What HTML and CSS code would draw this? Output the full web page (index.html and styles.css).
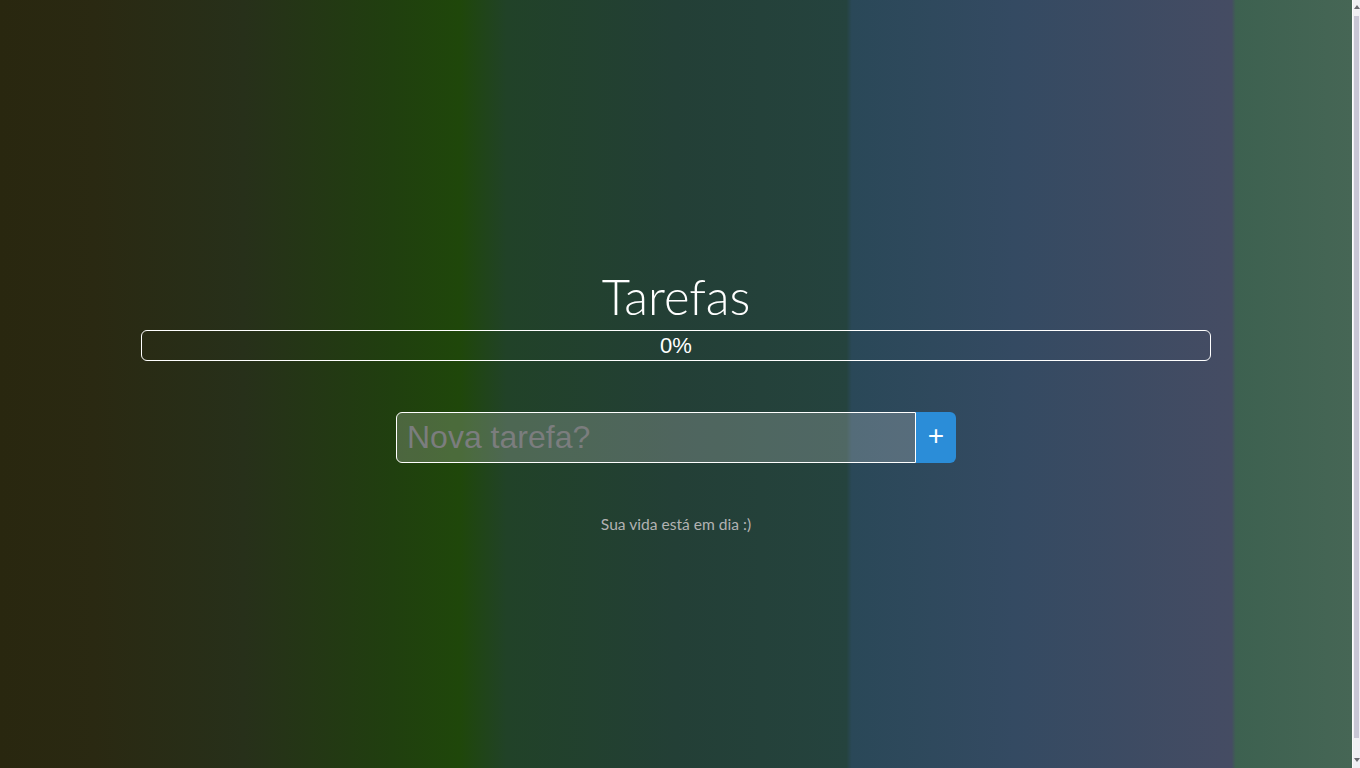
FILE: index.html
```html
<!DOCTYPE html>
<html lang="pt-BR">
<head>
<meta charset="utf-8">
<title>Tarefas</title>
<link rel="stylesheet" href="styles.css">
</head>
<body>
<div class="page">
  <main class="app">
    <h1 class="title">Tarefas</h1>
    <div class="progress"><span class="progress-label">0%</span></div>
    <form class="new-task">
      <input class="new-task-input" type="text" placeholder="Nova tarefa?">
      <button class="new-task-btn" type="button">+</button>
    </form>
    <p class="empty">Sua vida está em dia :)</p>
  </main>
</div>
<div class="scrollbar">
  <div class="scroll-arrow up"></div>
  <div class="scroll-thumb"></div>
  <div class="scroll-arrow down"></div>
</div>
</body>
</html>
```

FILE: styles.css
```css
html, body {
  height: 100%;
}
body {
  margin: 0;
  display: flex;
  overflow: hidden;
  font-family: Lato, "Liberation Sans", sans-serif;
  color: #fff;
  background: #f0eff3;
}
.page {
  flex: 1;
  min-width: 0;
  background: linear-gradient(to right,
    #29270f 0%,
    #2a2912 7%,
    #27301a 18%,
    #203f0f 29%,
    #1f470a 34%,
    #214228 37.5%,
    #233f36 50%,
    #25433e 62.6%,
    #2a4858 63%,
    #344a62 75%,
    #454c63 91.1%,
    #3d6150 91.4%,
    #466655 100%);
}
.app {
  width: 1070px;
  margin: 0 auto;
  padding-top: 267px;
  display: flex;
  flex-direction: column;
  align-items: center;
}
.title {
  margin: 0 0 5px;
  font-size: 49px;
  font-weight: 300;
  line-height: 58px;
  color: #fff;
}
.progress {
  box-sizing: border-box;
  width: 100%;
  height: 31px;
  border: 1px solid #fff;
  border-radius: 6px;
  display: flex;
  align-items: center;
  justify-content: center;
}
.progress-label {
  font-family: "Liberation Sans", Arial, sans-serif;
  font-size: 22px;
  line-height: 29px;
  color: #fff;
}
.new-task {
  margin-top: 51px;
  display: flex;
  width: 560px;
  height: 51px;
}
.new-task-input {
  box-sizing: border-box;
  flex: 1;
  min-width: 0;
  height: 51px;
  margin: 0;
  padding: 0 10px;
  border: 1px solid #fff;
  border-radius: 6px 0 0 6px;
  background: rgba(255, 255, 255, 0.2);
  font-family: "Liberation Sans", Arial, sans-serif;
  font-size: 32px;
  color: #fff;
  outline: none;
}
.new-task-input::placeholder {
  color: #7b7d7e;
}
.new-task-btn {
  box-sizing: border-box;
  width: 40px;
  height: 51px;
  margin: 0;
  padding: 0 0 4px;
  border: none;
  border-radius: 0 6px 6px 0;
  background: #2b8dd8;
  color: #fff;
  font-family: "Liberation Sans", Arial, sans-serif;
  font-size: 28px;
  line-height: 1;
}
.empty {
  margin: 51px 0 0;
  font-size: 15.6px;
  line-height: 20px;
  color: #b2b2b2;
}
.scrollbar {
  width: 8px;
  flex: none;
  display: flex;
  flex-direction: column;
  align-items: center;
  background: #f0eff3;
  border-left: 1px solid #fbfbfb;
  box-sizing: border-box;
}
.scroll-arrow {
  flex: none;
  width: 0;
  border-left: 3px solid transparent;
  border-right: 3px solid transparent;
  box-sizing: content-box;
}
.scroll-arrow.up {
  height: 0;
  margin: 5px 0 7px;
  border-bottom: 4px solid #6a6a70;
}
.scroll-arrow.down {
  height: 0;
  margin: 20px 0 6px;
  border-top: 4px solid #6a6a70;
}
.scroll-thumb {
  flex: 1;
  width: 5px;
  background: #c8c6d4;
}
```
